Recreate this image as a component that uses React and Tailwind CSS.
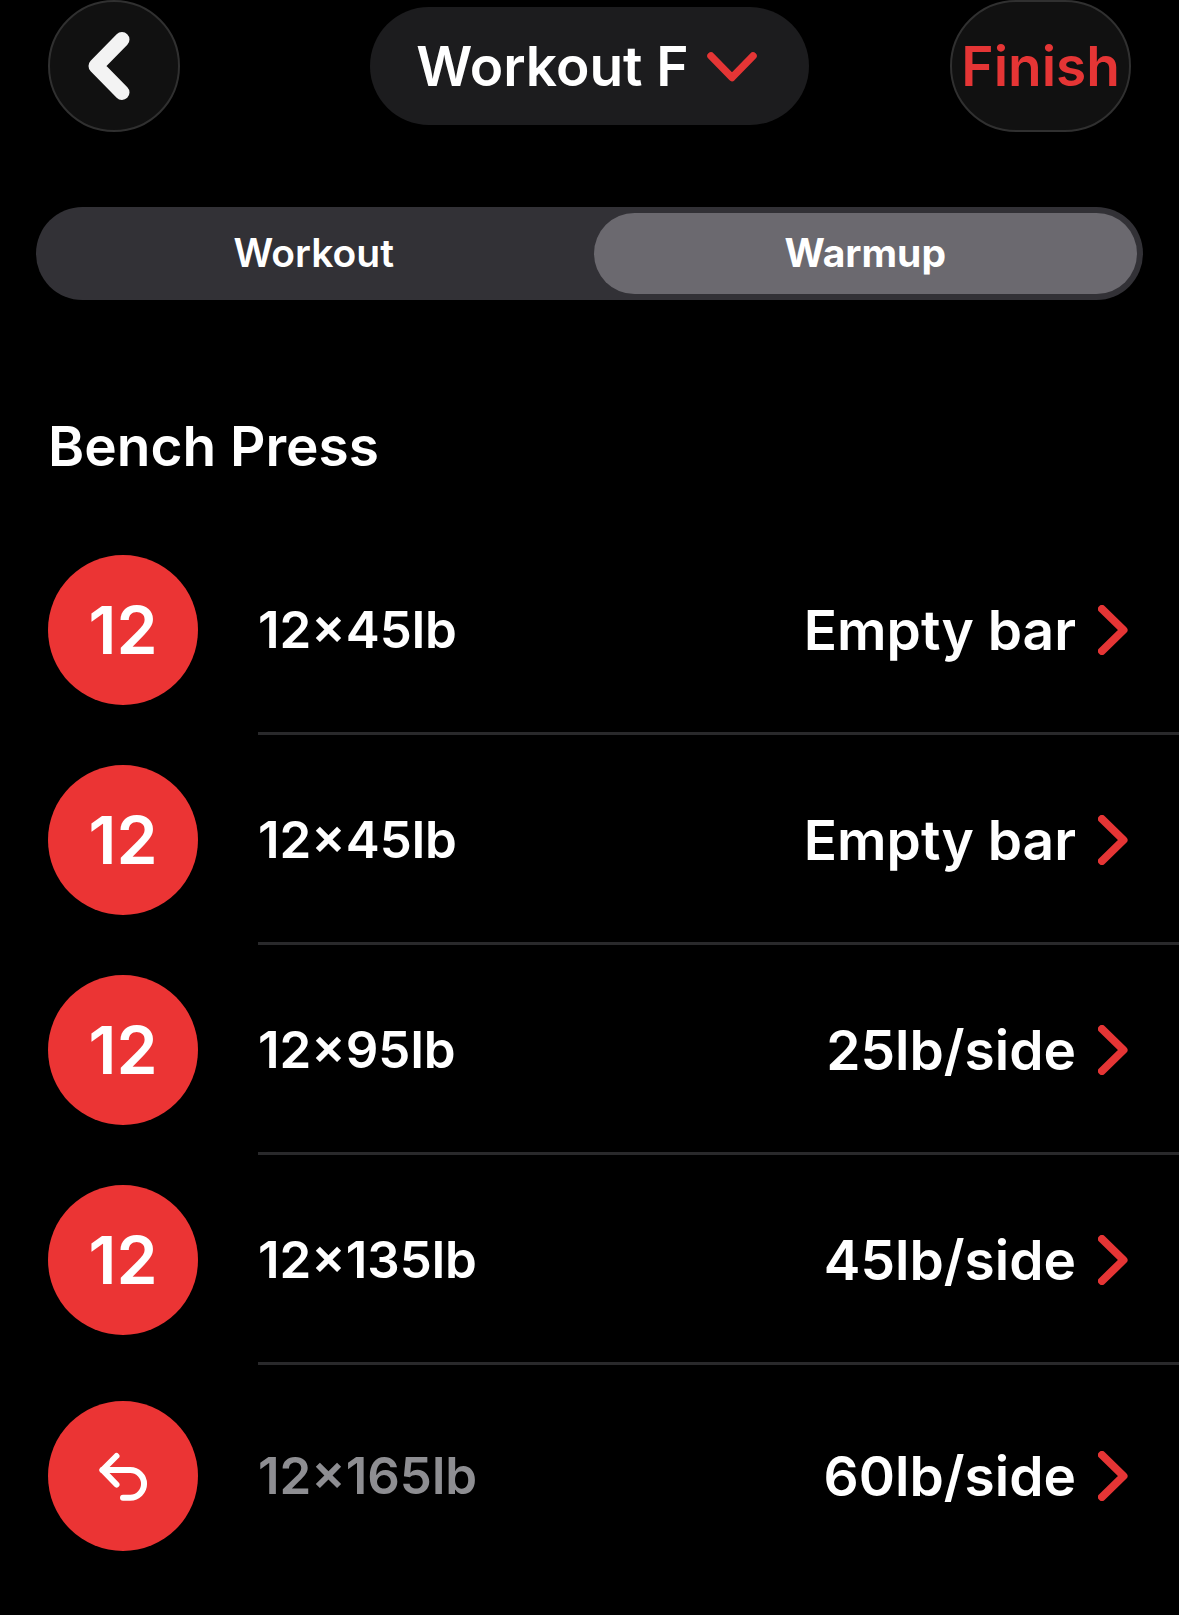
import { useState } from 'react';

const initialSets = [
  { id: 1, reps: 12, weight: 45, plates: 'Empty bar', done: true },
  { id: 2, reps: 12, weight: 45, plates: 'Empty bar', done: true },
  { id: 3, reps: 12, weight: 95, plates: '25lb/side', done: true },
  { id: 4, reps: 12, weight: 135, plates: '45lb/side', done: true },
  { id: 5, reps: 12, weight: 165, plates: '60lb/side', done: false },
];

function BackIcon() {
  return (
    <svg viewBox="0 0 42 68" className="w-[42px] h-[68px]" fill="none" stroke="#f3f3f3" strokeWidth="15" strokeLinecap="round" strokeLinejoin="round" aria-hidden="true">
      <path d="M34 7.5 L8 34 L34 60.5" />
    </svg>
  );
}

function ChevronDown() {
  return (
    <svg viewBox="0 0 50 32" className="w-[50px] h-[32px]" fill="none" stroke="#e53535" strokeWidth="7.5" strokeLinecap="round" strokeLinejoin="round" aria-hidden="true">
      <path d="M4 6 L25 27.5 L46 6" />
    </svg>
  );
}

function ChevronRight() {
  return (
    <svg viewBox="0 0 30 50" className="w-[30px] h-[50px] shrink-0" fill="none" stroke="#e53535" strokeWidth="8" strokeLinecap="round" strokeLinejoin="round" aria-hidden="true">
      <path d="M4 4 L25.5 25 L4 46" />
    </svg>
  );
}

function UndoIcon() {
  return (
    <svg viewBox="0 0 50 50" className="w-[50px] h-[50px]" fill="none" stroke="#fff" strokeWidth="6" strokeLinecap="round" strokeLinejoin="round" aria-hidden="true">
      <path d="M18.5 5 L4.5 19 L18.5 33.5" />
      <path d="M4.5 19 H32.2 A13.8 13.8 0 0 1 32.2 46.7 H25" />
    </svg>
  );
}

function Header() {
  return (
    <header className="grid grid-cols-[1fr_auto_1fr] items-center px-12">
      <button
        aria-label="Back"
        className="flex size-[132px] items-center justify-center rounded-full border-2 border-[#303030] bg-[#111111] pr-2.5"
      >
        <BackIcon />
      </button>

      <button className="flex h-[118px] items-center gap-[18px] rounded-full bg-[#1c1c1e] pr-[52px] pl-[46px] text-[55px] font-semibold">
        Workout F
        <ChevronDown />
      </button>

      <button className="h-[132px] justify-self-end rounded-full border-2 border-[#303030] bg-[#111111] px-[9px] text-[55px] font-semibold text-[#e53535]">
        Finish
      </button>
    </header>
  );
}

function Tabs({ active, onChange }) {
  return (
    <div role="tablist" className="mx-9 mt-[75px] grid grid-cols-2 gap-2 rounded-full bg-[#323136] p-1.5">
      {['Workout', 'Warmup'].map((tab) => (
        <button
          key={tab}
          role="tab"
          aria-selected={active === tab}
          onClick={() => onChange(tab)}
          className={`h-[81px] rounded-full text-[39px] ${active === tab ? 'bg-[#6b696f] font-bold' : 'font-semibold'}`}
        >
          {tab}
        </button>
      ))}
    </div>
  );
}

function SetRow({ set, onToggle }) {
  return (
    <li className="group flex h-[210px] gap-[60px] pl-12 last:h-[222px]">
      <button
        onClick={onToggle}
        aria-label={set.done ? undefined : 'Restore set'}
        className="flex size-[150px] shrink-0 items-center justify-center self-center rounded-full bg-[#eb3434] text-[66px] font-semibold"
      >
        {set.done ? set.reps : <UndoIcon />}
      </button>

      <div className="flex flex-1 items-center justify-between border-b-[3px] border-[#29292b] pt-[3px] pr-[51px] group-last:border-transparent">
        <span className={`text-[51px] font-semibold ${set.done ? '' : 'text-[#8e8e92]'}`}>
          {set.reps}×{set.weight}lb
        </span>
        <button className="flex items-center gap-[22px] text-[55px] font-semibold">
          {set.plates}
          <ChevronRight />
        </button>
      </div>
    </li>
  );
}

export default function App() {
  const [tab, setTab] = useState('Warmup');
  const [sets, setSets] = useState(initialSets);

  const toggleSet = (id) => {
    setSets(sets.map((s) => (s.id === id ? { ...s, done: !s.done } : s)));
  };

  return (
    <div className="min-h-screen bg-black font-[Inter,sans-serif] text-white">
      <Header />
      <Tabs active={tab} onChange={setTab} />

      {/* Exercise */}
      <section className="mt-28">
        <h2 className="px-12 text-[55px] leading-[68px] font-semibold">Bench Press</h2>
        <ul className="mt-[45px]">
          {sets.map((set) => (
            <SetRow key={set.id} set={set} onToggle={() => toggleSet(set.id)} />
          ))}
        </ul>
      </section>
    </div>
  );
}
